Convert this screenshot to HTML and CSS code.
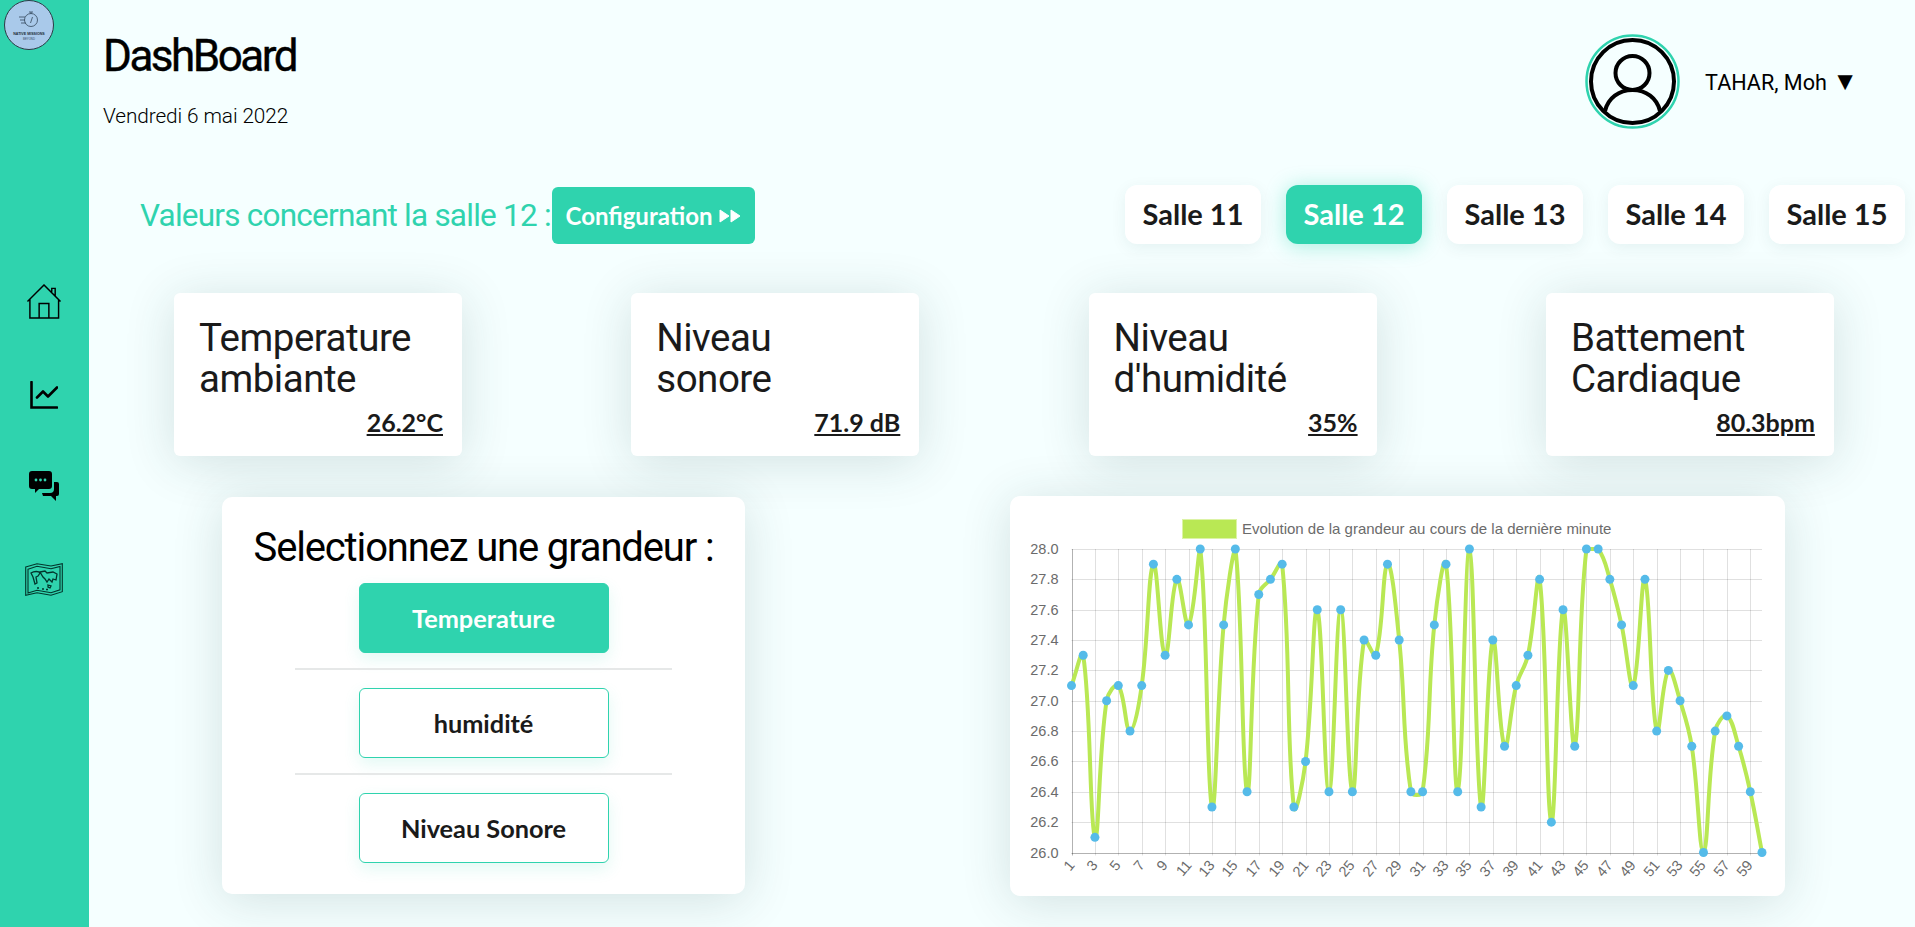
FILE: index.html
```html
<!DOCTYPE html>
<html lang="fr">
<head>
<meta charset="utf-8">
<title>DashBoard</title>
<link rel="stylesheet" href="styles.css">
</head>
<body>
<aside class="sidebar">
  <svg class="logo" viewBox="0 0 50 50">
    <circle cx="25" cy="25" r="24.500" fill="#a9c9ea" stroke="#2a3a44" stroke-width="1"/>
    <circle cx="27" cy="20" r="6.500" fill="none" stroke="#33475a" stroke-width=".8"/>
    <path d="M25 12h4M27 12v2M26.500 23l2-6M15 17h6M16 20h5M17 23h5" stroke="#33475a" stroke-width=".8" fill="none"/>
    <text x="25" y="35" class="logo-t1">NATIVE MISSIONS</text>
    <text x="25" y="40" class="logo-t2">BEYOND</text>
  </svg>
  <nav class="nav">
    <svg class="ico ico-home" viewBox="0 0 36 36"><path d="M1 18 18 1l17 17M3.500 16V35H33V16M13 35V20h10v15M26 8V4.500h3.500V12" fill="none" stroke="#000" stroke-width="1.500"/></svg>
    <svg class="ico ico-chart" viewBox="0 0 28 28"><path d="M1.500 1v25.500H27" fill="none" stroke="#000" stroke-width="2.600" stroke-linecap="round"/><path d="M7 16.500l6-6 5 5 9-9" fill="none" stroke="#000" stroke-width="2.600" stroke-linecap="round" stroke-linejoin="round"/></svg>
    <svg class="ico ico-chat" viewBox="0 0 30 30"><path d="M3 0h17a3 3 0 0 1 3 3v12a3 3 0 0 1-3 3H10l-4 4v-4H3a3 3 0 0 1-3-3V3a3 3 0 0 1 3-3z"/><path d="M25 11h3a2 2 0 0 1 2 2v10a2 2 0 0 1-2 2h-1v5l-5-5h-8l-1-3h8a4 4 0 0 0 4-4z"/><circle cx="7" cy="9" r="1.400" fill="#2fd3ae"/><circle cx="11.500" cy="9" r="1.400" fill="#2fd3ae"/><circle cx="16" cy="9" r="1.400" fill="#2fd3ae"/></svg>
    <svg class="ico ico-map" viewBox="0 0 38 33"><path d="M.7 4 12 .7 26 3 37.300.7v28L26 32.300 12 29.700.7 32.300zM3 6.200 12 3.300l14 2.400 9-2.300v23.500l-9 2.800-14-2.500-9 2.800z" fill="none" stroke="#02352b" stroke-width="1.100"/><path d="M6 10c3-2 8-2 9 0l-2 3-2 1 1 6-2 1-2-7zM15 9l5-1 2 2 6-1 4 2-1 6-3-1-1 3-3-3-2 3-2-3-2-2zM23 22l3 1-1 2-2-1zM12 25h2M17 26h2M21 26.500h2" fill="none" stroke="#02352b" stroke-width="1.300"/></svg>
  </nav>
</aside>
<main class="main">
  <header class="topbar">
    <div>
      <h1 class="title">DashBoard</h1>
      <p class="date">Vendredi 6 mai 2022</p>
    </div>
    <div class="user">
      <svg class="avatar" viewBox="0 0 95 95">
        <circle cx="47.500" cy="47.500" r="46" fill="#f5ffff" stroke="#2fd3ae" stroke-width="2.500"/>
        <circle cx="47.500" cy="47.500" r="41.500" fill="none" stroke="#000" stroke-width="4"/>
        <circle cx="47.500" cy="39" r="17" fill="none" stroke="#000" stroke-width="4"/>
        <path d="M20 77c3-13 14-21 27.500-21S72 64 75 77" fill="none" stroke="#000" stroke-width="4"/>
      </svg>
      <span class="user-name">TAHAR, Moh <span class="caret">▼</span></span>
    </div>
  </header>

  <section class="toolbar">
    <div class="toolbar-left">
      <h2 class="room-title">Valeurs concernant la salle 12 :</h2>
      <button class="config">Configuration
        <svg class="chev" viewBox="0 0 22 14"><path d="M1 1l9 6-9 6zM12 1l9 6-9 6z" fill="#fff" stroke="#fff" stroke-width="1" stroke-linejoin="round"/></svg>
      </button>
    </div>
    <div class="tabs">
      <button class="tab">Salle 11</button>
      <button class="tab tab-active">Salle 12</button>
      <button class="tab">Salle 13</button>
      <button class="tab">Salle 14</button>
      <button class="tab">Salle 15</button>
    </div>
  </section>

  <section class="cards">
    <article class="card"><h3 class="card-title">Temperature ambiante</h3><p class="card-value"><u>26.2°C</u></p></article>
    <article class="card"><h3 class="card-title">Niveau<br>sonore</h3><p class="card-value"><u>71.9 dB</u></p></article>
    <article class="card"><h3 class="card-title">Niveau<br>d'humidité</h3><p class="card-value"><u>35%</u></p></article>
    <article class="card"><h3 class="card-title">Battement Cardiaque</h3><p class="card-value"><u>80.3bpm</u></p></article>
  </section>

  <section class="bottom">
    <div class="picker">
      <h2 class="picker-title">Selectionnez une grandeur :</h2>
      <button class="pick pick-active">Temperature</button>
      <hr class="rule">
      <button class="pick">humidité</button>
      <hr class="rule">
      <button class="pick">Niveau Sonore</button>
    </div>
    <div class="chart-card">
      <svg id="chart" class="chart" viewBox="0 0 775 398" width="775" height="398"></svg>
    </div>
  </section>
</main>
<script src="chart.js"></script>
</body>
</html>
```
FILE: styles.css
```css
* { box-sizing: border-box; }
html, body { margin: 0; height: 100%; overflow: hidden; }
body {
  display: flex;
  background: #f5ffff;
  font-family: "Roboto", "Liberation Sans", sans-serif;
  color: #000;
}
button { font-family: "Lato", "Liberation Sans", sans-serif; cursor: pointer; }

.sidebar {
  flex: 0 0 89px;
  height: 927px;
  background: #2fd3ae;
}
.logo { display: block; width: 50px; height: 50px; margin: 0 0 0 4px; }
.logo-t1 { font: 700 3.600px "Liberation Sans", sans-serif; text-anchor: middle; fill: #1d2b36; }
.logo-t2 { font: 400 2.800px "Liberation Sans", sans-serif; text-anchor: middle; fill: #33475a; }
.nav {
  display: flex;
  flex-direction: column;
  align-items: center;
  gap: 62px;
  margin-top: 234px;
  padding-right: 2px;
}
.ico { display: block; flex: none; }
.ico-home { width: 36px; height: 35px; }
.ico-chart { width: 28px; height: 28px; }
.ico-chat { width: 30px; height: 30px; }
.ico-map { width: 38px; height: 33px; }

.main { flex: 1; min-width: 0; }

.topbar {
  display: flex;
  justify-content: space-between;
  align-items: flex-start;
  height: 187px;
  padding: 31px 57px 0 14px;
}
.title { margin: 0; font-size: 44px; font-weight: 400; line-height: 50px; letter-spacing: -2.500px; -webkit-text-stroke: .4px #000; }
.date { margin: 23px 0 0; font-size: 20.800px; line-height: 24px; font-weight: 300; letter-spacing: -.1px; }
.user { display: flex; align-items: center; gap: 25.500px; margin-top: 3px; }
.avatar { width: 95px; height: 95px; display: block; }
.user-name { font-size: 21.600px; line-height: 28px; margin-top: 2px; white-space: nowrap; }
.caret { font-size: 26px; line-height: 20px; }

.toolbar {
  display: flex;
  justify-content: space-between;
  align-items: flex-start;
  height: 106px;
  padding: 0 10px 0 51px;
}
.toolbar-left { display: flex; align-items: center; }
.room-title { flex: 0 0 412px; margin: 0; font-size: 31.500px; font-weight: 400; color: #2fd3ae; letter-spacing: -.77px; line-height: 57px; white-space: nowrap; }
.config {
  display: flex;
  align-items: center;
  justify-content: center;
  gap: 7px;
  width: 203px; height: 57px;
  border: 0; border-radius: 6px;
  background: #2fd3ae; color: #fff;
  font-size: 24px; font-weight: 700; padding: 0;
}
.chev { width: 22px; height: 14px; flex: none; }
.tabs { display: flex; gap: 25px; margin-top: -2px; }
.tab {
  width: 136px; height: 59px;
  border: 0; border-radius: 12px;
  background: #fff; color: #1a1a1a;
  font-size: 29px; font-weight: 700; padding: 0 0 2px;
  box-shadow: 0 4px 16px rgba(20, 70, 70, .07);
}
.tab-active { background: #2fd3ae; color: #fff; box-shadow: 0 2px 20px rgba(47, 211, 174, .4); }

.cards { display: flex; gap: 169.300px; padding-left: 85px; }
.card {
  flex: none;
  width: 288px; height: 163px;
  background: #fff;
  border-radius: 6px;
  padding: 24px 19px 0 25px;
  box-shadow: 0 6px 50px rgba(30, 70, 70, .16);
}
.card-title { margin: 0; font-size: 38.500px; line-height: 41px; font-weight: 400; color: #1a1a1a; letter-spacing: -.5px; }
.card-value { margin: 8px 0 0; text-align: right; font: 700 25px/30px "Lato", "Liberation Sans", sans-serif; color: #1a1a1a; }

.bottom {
  display: flex;
  align-items: flex-start;
  gap: 265px;
  margin-top: 41px;
  padding-left: 133px;
}
.picker {
  width: 523px; height: 397px;
  background: #fff;
  border-radius: 10px;
  padding-top: 28px;
  display: flex;
  flex-direction: column;
  align-items: center;
  box-shadow: 0 6px 50px rgba(30, 70, 70, .16);
}
.picker-title { margin: 0 0 13px; font-size: 40px; line-height: 45px; font-weight: 400; letter-spacing: -1.150px; white-space: nowrap; }
.pick {
  width: 250px; height: 70px;
  border: 1px solid #2fd3ae; border-radius: 6px;
  background: #fff; color: #1a1a1a;
  font-size: 25.300px; font-weight: 700; padding: 0;
  flex: none;
  box-shadow: 0 6px 16px rgba(47, 211, 174, .14);
}
.pick-active { background: #2fd3ae; color: #fff; }
.rule { width: 377px; height: 2px; border: 0; background: #e6e8e8; margin: 15px 0 18px; flex: none; }

.chart-card {
  width: 775px; height: 400px;
  background: #fff;
  border-radius: 10px;
  margin-top: -1px;
  box-shadow: 0 6px 50px rgba(30, 70, 70, .16);
}
.chart { display: block; }
.chart text { font-family: "Liberation Sans", Arial, sans-serif; font-size: 14.500px; fill: #6b6b6b; }
.chart .legend-label { font-size: 15px; }
.grid { stroke: #000; stroke-opacity: .12; stroke-width: 1; }
.axis { stroke: #000; stroke-opacity: .3; stroke-width: 1; }
.legend-box { fill: #b9e854; stroke: #dcf3a6; stroke-width: 1; }
.series { fill: none; stroke: #b9e854; stroke-width: 4; }
.dot { fill: #55bbe9; }
```
FILE: chart.js
```js
(function () {
  var values = [27.1,27.3,26.1,27.0,27.1,26.8,27.1,27.9,27.3,27.8,27.5,28.0,26.3,27.5,28.0,26.4,27.7,27.8,27.9,26.3,
    26.6,27.6,26.4,27.6,26.4,27.4,27.3,27.9,27.4,26.4,26.4,27.5,27.9,26.4,28.0,26.3,27.4,26.7,27.1,27.3,
    27.8,26.2,27.6,26.7,28.0,28.0,27.8,27.5,27.1,27.8,26.8,27.2,27.0,26.7,26.0,26.8,26.9,26.7,26.4,26.0];
  var svg = document.getElementById('chart');
  var NS = 'http://www.w3.org/2000/svg';
  var left = 61.5, right = 752, top = 53, bottom = 356.5;
  var stepX = (right - left) / 59;
  function el(name, attrs, text) {
    var e = document.createElementNS(NS, name);
    for (var k in attrs) e.setAttribute(k, attrs[k]);
    if (text !== undefined) e.textContent = text;
    svg.appendChild(e);
    return e;
  }
  function px(i) { return left + i * stepX; }
  function py(v) { return top + (28 - v) / 2 * (bottom - top); }

  el('rect', { x: 172.500, y: 23.500, width: 54, height: 19, 'class': 'legend-box' });
  el('text', { x: 232, y: 38, 'class': 'legend-label' }, 'Evolution de la grandeur au cours de la dernière minute');

  for (var t = 0; t <= 10; t++) {
    var v = 28 - t * 0.2, y = Math.round(py(v)) + 0.5;
    el('line', { x1: left, x2: right, y1: y, y2: y, 'class': t === 10 ? 'axis' : 'grid' });
    el('text', { x: left - 13, y: y + 4, 'text-anchor': 'end' }, v.toFixed(1));
  }
  for (var i = 0; i < 60; i += 2) {
    var x = Math.round(px(i)) + 0.5;
    el('line', { x1: x, x2: x, y1: top, y2: bottom + 3, 'class': i === 0 ? 'axis' : 'grid' });
    el('text', { x: x + 3, y: bottom + 13, 'text-anchor': 'end',
      transform: 'rotate(-50 ' + (x + 3) + ' ' + (bottom + 13) + ')' }, String(i + 1));
  }

  var pts = values.map(function (v, i) { return { x: px(i), y: py(v) }; });
  var tension = 0.4;
  var ctrl = pts.map(function (p, i) {
    var a = pts[Math.max(i - 1, 0)], b = pts[Math.min(i + 1, pts.length - 1)];
    var d01 = Math.hypot(p.x - a.x, p.y - a.y), d12 = Math.hypot(b.x - p.x, b.y - p.y);
    var s = d01 + d12 || 1, fa = tension * d01 / s, fb = tension * d12 / s;
    function cap(y) { return Math.min(Math.max(y, top), bottom); }
    return {
      px: p.x - fa * (b.x - a.x), py: cap(p.y - fa * (b.y - a.y)),
      nx: p.x + fb * (b.x - a.x), ny: cap(p.y + fb * (b.y - a.y))
    };
  });
  var d = 'M' + pts[0].x + ' ' + pts[0].y;
  for (var j = 1; j < pts.length; j++) {
    d += 'C' + ctrl[j - 1].nx + ' ' + ctrl[j - 1].ny + ' ' + ctrl[j].px + ' ' + ctrl[j].py + ' ' + pts[j].x + ' ' + pts[j].y;
  }
  el('path', { d: d, 'class': 'series' });
  pts.forEach(function (p) { el('circle', { cx: p.x, cy: p.y, r: 4.500, 'class': 'dot' }); });
})();
```
